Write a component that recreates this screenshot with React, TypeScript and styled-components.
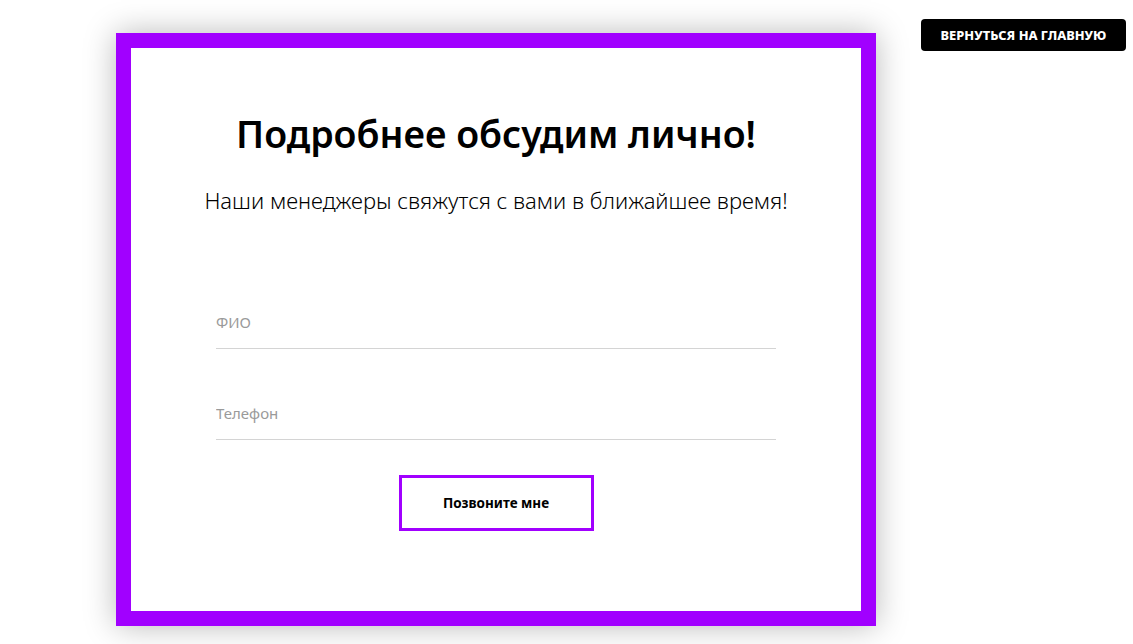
import * as React from 'react';
import styled, { createGlobalStyle } from 'styled-components';

const GlobalStyle = createGlobalStyle`
    html, body {
        margin: 0;
        padding: 0;
        background: #ffffff;
        font-family: "Noto Sans", "Open Sans", Arial, sans-serif;
    }
`;

const Page = styled.div`
    display: flex;
    justify-content: space-between;
    align-items: flex-start;
    padding: 19px 7px 0 116px;
    height: 644px;
    box-sizing: border-box;
    overflow: hidden;
`;

const Frame = styled.div`
    margin-top: 14px;
    width: 760px;
    height: 593px;
    box-sizing: border-box;
    border: 15px solid #a100ff;
    background: #ffffff;
    box-shadow: 0 0 30px rgba(0, 0, 0, 0.28);
    display: flex;
    flex-direction: column;
    align-items: center;
    padding-top: 58px;
`;

const Title = styled.h1`
    margin: 0;
    font-size: 37.5px;
    line-height: 56px;
    font-weight: 600;
    color: #000000;
    letter-spacing: 0;
`;

const Subtitle = styled.p`
    margin: 23px 0 0;
    font-size: 22px;
    line-height: 30px;
    font-weight: 300;
    color: #000000;
`;

const Form = styled.form`
    margin-top: 97px;
    width: 560px;
    display: flex;
    flex-direction: column;
    align-items: center;
`;

const Field = styled.input<{ $gap: number }>`
    width: 100%;
    margin-top: ${p => p.$gap}px;
    box-sizing: border-box;
    border: 0;
    border-bottom: 1px solid #d4d4d4;
    outline: none;
    padding: 0 0 16px;
    font-family: inherit;
    font-size: 15px;
    line-height: 20px;
    font-weight: 400;
    color: #000;
    background: transparent;

    &::placeholder {
        color: #9a9a9a;
    }
`;

const Submit = styled.button`
    margin-top: 35px;
    width: 195px;
    height: 56px;
    box-sizing: border-box;
    border: 3px solid #a100ff;
    background: #ffffff;
    font-family: inherit;
    font-size: 13.5px;
    font-weight: 700;
    color: #000;
    cursor: pointer;
`;

const BackButton = styled.a`
    display: flex;
    align-items: center;
    justify-content: center;
    width: 205px;
    height: 32px;
    border-radius: 4px;
    background: #000000;
    color: #ffffff;
    font-size: 12.8px;
    font-weight: 800;
    text-transform: uppercase;
    text-decoration: none;
`;

export default class App extends React.Component {
    render () {
        return (
            <Page>
                <GlobalStyle />
                <Frame>
                    <Title>Подробнее обсудим лично!</Title>
                    <Subtitle>Наши менеджеры свяжутся с вами в ближайшее время!</Subtitle>
                    <Form onSubmit={e => e.preventDefault()}>
                        <Field $gap={0} placeholder="ФИО" />
                        <Field $gap={54} placeholder="Телефон" />
                        <Submit type="submit">Позвоните мне</Submit>
                    </Form>
                </Frame>
                <BackButton href="#">Вернуться на главную</BackButton>
            </Page>
        )
    }
}
